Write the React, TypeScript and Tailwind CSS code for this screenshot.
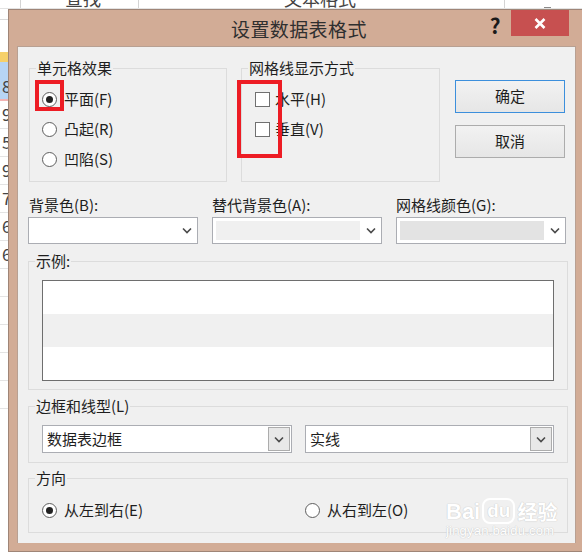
import React from 'react';

const FONT = "font-['Noto_Sans_CJK_SC','Noto_Sans',sans-serif]";

function Chevron() {
  return (
    <svg width="10" height="7" viewBox="0 0 10 7" className="shrink-0">
      <path d="M1 1.5 L5 5.5 L9 1.5" fill="none" stroke="#4a4a4a" strokeWidth="1.6" />
    </svg>
  );
}

function Radio({ checked, label }: { checked?: boolean; label: string }) {
  return (
    <div className="flex items-center gap-[7px] h-[30px]">
      <span className="w-[15px] h-[15px] rounded-full border border-[#5e5e5e] bg-white flex items-center justify-center shrink-0">
        {checked && <span className="w-[7px] h-[7px] rounded-full bg-[#222]" />}
      </span>
      <span className="text-[15px] leading-[20px] text-[#1e1e1e]">{label}</span>
    </div>
  );
}

function Check({ label }: { label: string }) {
  return (
    <div className="flex items-center gap-[5px] h-[30px]">
      <span className="w-[15px] h-[15px] border border-[#707070] bg-white shrink-0" />
      <span className="text-[15px] leading-[20px] text-[#1e1e1e]">{label}</span>
    </div>
  );
}

function Group({
  title,
  className,
  inner,
  children,
}: {
  title: string;
  className: string;
  inner: string;
  children: React.ReactNode;
}) {
  return (
    <fieldset className={`border border-[#dcdcdc] ${className}`}>
      <legend className="ml-[6px] px-[1px] text-[15px] leading-[16px] text-[#1e1e1e]">{title}</legend>
      <div className={inner}>{children}</div>
    </fieldset>
  );
}

function ColorCombo({ fill }: { fill?: string }) {
  return (
    <div className="h-[27px] border border-[#abadb3] bg-white flex items-center pl-[3px] pr-[5px] gap-[6px]">
      <div className={`flex-1 h-[19px] ${fill ?? ''}`} />
      <Chevron />
    </div>
  );
}

function TextCombo({ text, className }: { text: string; className: string }) {
  return (
    <div className={`h-[28px] border border-[#abadb3] bg-white flex items-center p-px ${className}`}>
      <span className="flex-1 pl-[3px] text-[15px] leading-[20px] text-[#1e1e1e]">{text}</span>
      <div className="w-[22px] h-full border border-[#acacac] bg-[#e8e8e8] flex items-center justify-center">
        <Chevron />
      </div>
    </div>
  );
}

function Sheet() {
  const digits = ['9', '5', '9', '7', '6', '6', '', '', '', '', ''];
  return (
    <div className="absolute inset-0 bg-white text-[#444]">
      {/* 上方表头 */}
      <div className="h-[9px] relative overflow-hidden border-b border-[#e3e3e3]">
        <span className="absolute left-[20px] top-0 h-full border-l border-[#d4d4d4]" />
        <span className="absolute left-[138px] top-0 h-full border-l border-[#d4d4d4]" />
        <span className="absolute left-[504px] top-0 h-full border-l border-[#d4d4d4]" />
        <span className="absolute left-[65px] top-[-12px] text-[18px] leading-[20px]">查找</span>
        <span className="absolute left-[284px] top-[-12px] text-[18px] leading-[20px]">文本格式</span>
        <span className="absolute left-[544px] top-[7px] w-[7px] h-[2px] bg-[#8a8a8a]" />
      </div>
      {/* 左侧行 */}
      <div className="w-[8px] flex flex-col">
        <div className="h-[11px] border-b border-[#dadada]" />
        <div className="h-[32px]" />
        <div className="h-[10px] bg-[#f6d06a]" />
        <div className="h-[39px] bg-[#b7d5f5] border-b-2 border-[#f2b3b3] pl-[2px] pt-[14px] text-[17px] leading-[20px]">8</div>
        {digits.map((d, i) => (
          <div key={i} className="h-[28px] border-b border-[#e4e4e4] pl-[2px] pt-[3px] text-[17px] leading-[20px]">
            {d}
          </div>
        ))}
      </div>
    </div>
  );
}

export default function App() {
  return (
    <div className={`relative w-[582px] h-[554px] overflow-hidden ${FONT}`}>
      <Sheet />

      {/* 对话框 */}
      <div className="absolute left-[8px] top-[9px] w-[600px] h-[543px] bg-[#d2ac96] border border-[#9f8577] flex flex-col">
        {/* 标题栏 */}
        <div className="h-[36px] flex items-start shrink-0">
          <div className="pl-[222px] pt-[7px] text-[19px] leading-[24px] text-[#2f2f2f] tracking-[0.4px]">设置数据表格式</div>
          <div className="ml-[123px] pt-[2px] text-[21px] leading-[26px] font-bold text-[#1a1a1a]">?</div>
          <div className="ml-[10px] w-[58px] h-[26px] bg-[#c75050] flex items-center justify-center">
            <svg width="12" height="11" viewBox="0 0 12 11">
              <path d="M1.5 1 L10.5 10 M10.5 1 L1.5 10" stroke="white" strokeWidth="2.6" />
            </svg>
          </div>
        </div>

        {/* 客户区 */}
        <div className="ml-[8px] w-[559px] h-[497px] bg-[#f0f0f0] border border-[#b8a092] border-b-0 pt-[13px] pl-[10px]">
          {/* 第一行 */}
          <div className="flex items-start">
            <Group title="单元格效果" className="ml-px w-[198px] h-[122px]" inner="pl-[12px] pt-[8px]">
              <Radio checked label="平面(F)" />
              <Radio label="凸起(R)" />
              <Radio label="凹陷(S)" />
            </Group>
            <Group title="网格线显示方式" className="ml-[14px] w-[199px] h-[122px]" inner="pl-[13px] pt-[8px]">
              <Check label="水平(H)" />
              <Check label="垂直(V)" />
            </Group>
            <div className="ml-[15px] mt-[20px] w-[110px] flex flex-col gap-[12px]">
              <button className="h-[33px] border border-[#3c8fdc] bg-gradient-to-b from-[#f2f2f2] to-[#e6e6e6] text-[15px] text-[#1e1e1e]">
                确定
              </button>
              <button className="h-[33px] border border-[#acacac] bg-gradient-to-b from-[#f2f2f2] to-[#e6e6e6] text-[15px] text-[#1e1e1e]">
                取消
              </button>
            </div>
          </div>

          {/* 颜色 */}
          <div className="mt-[13px] grid grid-cols-[170px_170px_170px] gap-x-[14px]">
            <div className="text-[15px] leading-[20px] text-[#1e1e1e] pl-px">背景色(B):</div>
            <div className="text-[15px] leading-[20px] text-[#1e1e1e]">替代背景色(A):</div>
            <div className="text-[15px] leading-[20px] text-[#1e1e1e]">网格线颜色(G):</div>
            <div className="mt-[2px]"><ColorCombo /></div>
            <div className="mt-[2px]"><ColorCombo fill="bg-[#f0f0f0]" /></div>
            <div className="mt-[2px]"><ColorCombo fill="bg-[#e3e3e3]" /></div>
          </div>

          {/* 示例 */}
          <Group title="示例:" className="mt-[9px] w-[540px]" inner="pl-[13px] pt-[11px] pb-[8px]">
            <div className="w-[512px] border border-[#6e6e6e] flex flex-col">
              <div className="h-[33px] bg-white" />
              <div className="h-[33px] bg-[#f0f0f0]" />
              <div className="h-[33px] bg-white" />
            </div>
          </Group>

          {/* 边框和线型 */}
          <Group title="边框和线型(L)" className="mt-[8px] w-[540px]" inner="pl-[13px] pt-[11px] pb-[9px]">
            <div className="flex gap-[13px]">
              <TextCombo text="数据表边框" className="w-[250px]" />
              <TextCombo text="实线" className="w-[249px]" />
            </div>
          </Group>

          {/* 方向 */}
          <Group title="方向" className="mt-[7px] w-[540px]" inner="pl-[13px] pt-[9px] pb-[7px]">
            <div className="flex">
              <div className="w-[263px]">
                <Radio checked label="从左到右(E)" />
              </div>
              <Radio label="从右到左(O)" />
            </div>
          </Group>
        </div>
      </div>

      {/* 红色标注框 */}
      <div className="absolute left-[35px] top-[80px] w-[29px] h-[31px] border-4 border-[#ed1c24]" />
      <div className="absolute left-[237px] top-[80px] w-[45px] h-[78px] border-4 border-[#ed1c24]" />

      {/* 水印 */}
      <div className="absolute left-[446px] top-[490px] text-white font-['Liberation_Sans',sans-serif] [text-shadow:0_0_1px_#c8c8c8,0_0_1px_#c8c8c8]">
        <div className="flex items-end gap-[2px] h-[34px]">
          <span className="text-[22px] leading-[24px] font-bold">Bai</span>
          <span className="relative text-[19px] leading-[22px] font-bold px-[3px] rounded-[8px] border-2 border-white">du</span>
          <span className="text-[20px] leading-[24px] font-bold font-['Noto_Sans_CJK_SC',sans-serif]">经验</span>
        </div>
        <div className="text-[13px] leading-[14px] tracking-[0.2px]">jingyan.baidu.com</div>
      </div>
    </div>
  );
}
